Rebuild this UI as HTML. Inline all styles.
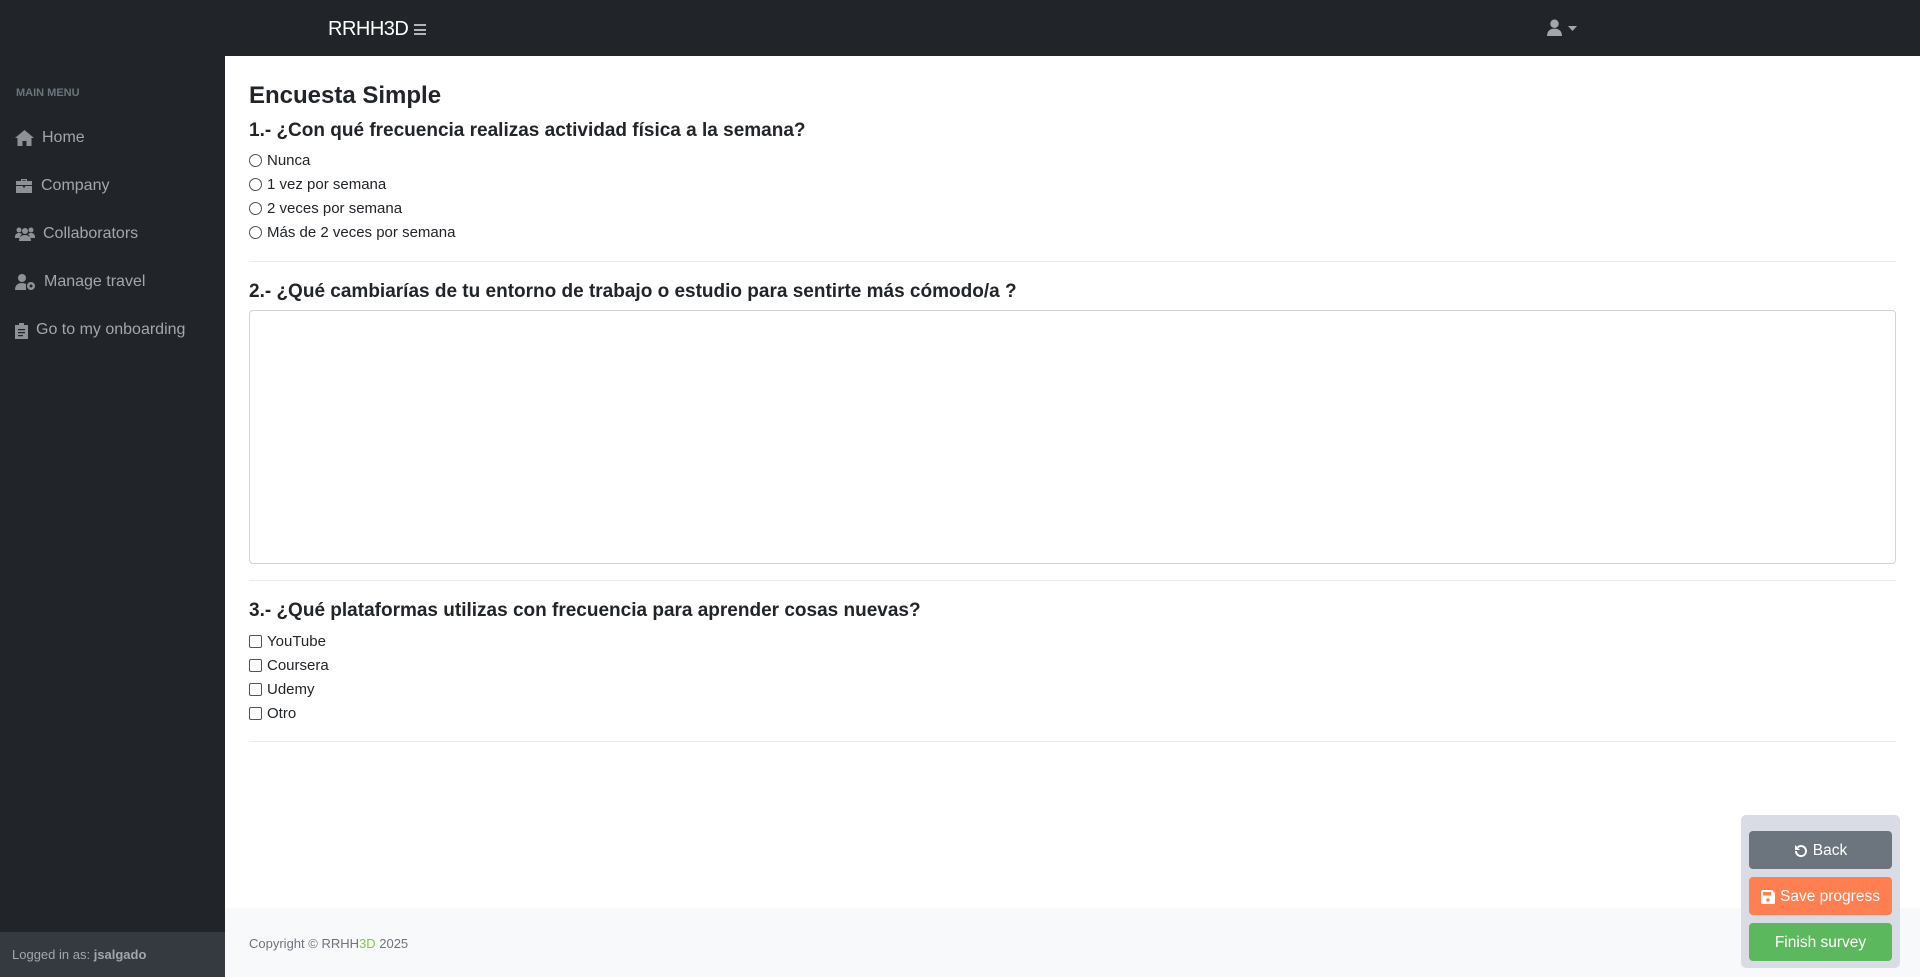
<!DOCTYPE html>
<html><head><meta charset="utf-8">
<style>
*{box-sizing:border-box;margin:0;padding:0}
body{width:1920px;height:977px;overflow:hidden;font-family:"Liberation Sans",sans-serif;background:#fff;color:#212529;position:relative}
.top{position:absolute;left:0;top:0;width:1920px;height:56px;background:#212529}
.brand{position:absolute;left:328px;top:18px;color:#fff;font-size:20px;letter-spacing:-0.5px}
.ham{position:absolute;left:414px;top:24px;width:12px;height:11px}
.ham i{display:block;height:2px;background:#adb5bd;margin-bottom:2.5px}
.side{position:absolute;left:0;top:56px;width:225px;height:921px;background:#212529}
.mm{position:absolute;left:16px;top:31px;font-size:11px;font-weight:bold;color:#6c757d}
.item{position:absolute;left:15px;color:#a3a6aa;font-size:16px;display:flex;align-items:center;gap:8px}
.item svg{fill:#8e9296}
.sfoot{position:absolute;left:0;top:932px;width:225px;height:45px;background:#343a40;color:#a3a6aa;font-size:13px;padding:15px 12px}
.main{position:absolute;left:249px;top:0;width:1647px}
h1{position:absolute;top:82px;font-size:24px;font-weight:bold;color:#212529}
h5{position:absolute;font-size:19px;font-weight:bold;color:#212529;white-space:nowrap}
.opt{position:absolute;font-size:15px;color:#212529;display:flex;align-items:center}
.rad{width:13px;height:13px;border:1px solid #555;border-radius:50%;margin-right:5px}
.chk{width:13px;height:13px;border:1px solid #555;border-radius:2px;margin-right:5px}
hr{position:absolute;left:0;width:1647px;border:0;border-top:1px solid #e9ecef}
.ta{position:absolute;left:0;top:310px;width:1647px;height:254px;border:1px solid #ced4da;border-radius:4px}
.foot{position:absolute;left:225px;top:908px;width:1695px;height:69px;background:#f8f9fa}
.copy{position:absolute;left:249px;top:936px;font-size:13px;color:#6c757d}
.panel{position:absolute;left:1741px;top:815px;width:159px;height:153px;background:#d9dce4;border-radius:5px}
.btn{position:absolute;left:8px;width:143px;height:38px;border-radius:4px;color:#fff;font-size:15.5px;display:flex;align-items:center;justify-content:center;gap:5px;padding-top:2px}
</style></head><body>
<div class="top">
<div class="brand">RRHH3D</div>
<div class="ham"><i></i><i></i><i></i></div>
<svg style="position:absolute;left:1546px;top:19px" width="17" height="17" viewBox="0 0 16 16"><circle cx="8" cy="4.5" r="4" fill="#a3a6aa"/><path d="M1 16c0-5 3-7 7-7s7 2 7 7z" fill="#a3a6aa"/></svg>
<svg style="position:absolute;left:1568px;top:26px" width="9" height="5" viewBox="0 0 9 5"><path d="M0 0h9L4.5 5z" fill="#a3a6aa"/></svg>
</div>
<div class="side">
<div class="mm">MAIN MENU</div>
<div class="item" style="top:73px"><svg width="19" height="16" viewBox="0 0 19 16"><path d="M9.5 0L0 8h2.5v8h5v-5h4v5h5V8H19z"/></svg>Home</div>
<div class="item" style="top:121px"><svg width="18" height="16" viewBox="0 0 18 16"><path d="M6 1h6v2h5v4H1V3h5zM7.5 2.3v.7h3v-.7zM1 8h7v1.5h2V8h7v7H1z"/></svg>Company</div>
<div class="item" style="top:169px"><svg width="20" height="16" viewBox="0 0 20 16"><circle cx="4" cy="4" r="2.5"/><circle cx="16" cy="4" r="2.5"/><circle cx="10" cy="5" r="3"/><path d="M0 11c0-3 2-4 4-4s3 1 3 1c-1 1-2 2-2 4H0zM20 11c0-3-2-4-4-4s-3 1-3 1c1 1 2 2 2 4h5zM4 15c0-4 2.5-6 6-6s6 2 6 6z"/></svg>Collaborators</div>
<div class="item" style="top:217px"><svg width="21" height="16" viewBox="0 0 21 16"><circle cx="7" cy="4" r="4"/><path d="M0 16c0-5 3-7 7-7 2 0 3 .5 4 1v6z"/><circle cx="16" cy="12" r="4"/><circle cx="16" cy="12" r="1.5" fill="#212529"/></svg>Manage travel</div>
<div class="item" style="top:265px"><svg width="13" height="17" viewBox="0 0 13 17"><path d="M4 1h5v2h4v14H0V3h4zM3 7h7v1.3H3zM3 10h7v1.3H3zM3 13h5v1.3H3z" fill-rule="evenodd"/></svg>Go to my onboarding</div>
<div class="sfoot" style="top:876px">Logged in as: <b>jsalgado</b></div>
</div>
<div class="main">
<h1>Encuesta Simple</h1>
<h5 style="top:120px">1.- ¿Con qué frecuencia realizas actividad física a la semana?</h5>
<div class="opt" style="top:152px"><span class="rad"></span>Nunca</div>
<div class="opt" style="top:176px"><span class="rad"></span>1 vez por semana</div>
<div class="opt" style="top:200px"><span class="rad"></span>2 veces por semana</div>
<div class="opt" style="top:224px"><span class="rad"></span>Más de 2 veces por semana</div>
<hr style="top:261px">
<h5 style="top:281px">2.- ¿Qué cambiarías de tu entorno de trabajo o estudio para sentirte más cómodo/a ?</h5>
<div class="ta"></div>
<hr style="top:580px">
<h5 style="top:600px">3.- ¿Qué plataformas utilizas con frecuencia para aprender cosas nuevas?</h5>
<div class="opt" style="top:633px"><span class="chk"></span>YouTube</div>
<div class="opt" style="top:657px"><span class="chk"></span>Coursera</div>
<div class="opt" style="top:681px"><span class="chk"></span>Udemy</div>
<div class="opt" style="top:705px"><span class="chk"></span>Otro</div>
<hr style="top:741px">
</div>
<div class="foot"></div>
<div class="copy">Copyright © RRHH<span style="color:#8cc63f">3D</span> 2025</div>
<div class="panel">
<div class="btn" style="top:16px;background:#6c757d"><svg width="14" height="14" viewBox="0 0 14 14"><path d="M2 7a5 5 0 1 0 1.6-3.6" stroke="#fff" stroke-width="2" fill="none"/><path d="M1 1v5h5z" fill="#fff"/></svg>Back</div>
<div class="btn" style="top:62px;background:#ff7f50"><svg width="14" height="14" viewBox="0 0 14 14"><path d="M0 1.5A1.5 1.5 0 0 1 1.5 0H11l3 3v9.5a1.5 1.5 0 0 1-1.5 1.5h-11A1.5 1.5 0 0 1 0 12.5zM2 2v3.5h8V2z" fill="#fff" fill-rule="evenodd"/><circle cx="7" cy="10" r="1.8" fill="#ff7f50"/></svg>Save progress</div>
<div class="btn" style="top:108px;background:#5cb85c">Finish survey</div>
</div>
</body></html>
